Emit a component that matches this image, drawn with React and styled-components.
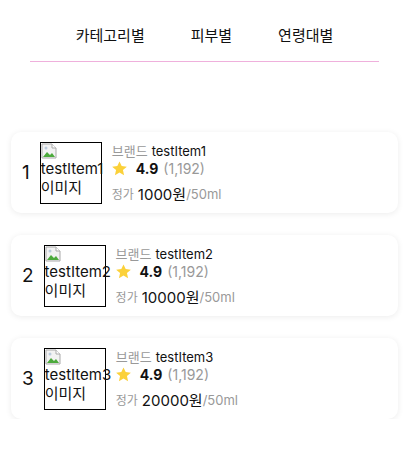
import styled, { createGlobalStyle } from "styled-components";

const GlobalStyle = createGlobalStyle`
  body {
    margin: 0;
    background: #fff;
    font-family: "Inter", "Noto Sans CJK KR", sans-serif;
    color: #111;
  }
`;

const Page = styled.div`
  width: 412px;
  padding: 0 14px 0 11px;
  box-sizing: border-box;
`;

const Nav = styled.nav`
  display: flex;
  justify-content: center;
  gap: 46px;
  margin: 0 19px;
  padding: 25px 0 16px;
  border-bottom: 1px solid #efb0dc;
`;

const Tab = styled.button`
  border: none;
  background: none;
  padding: 0;
  font-family: "Noto Sans CJK KR", sans-serif;
  font-size: 15px;
  line-height: 20px;
  color: #111;
  cursor: pointer;
`;

const List = styled.ul`
  list-style: none;
  margin: 70px 0 0;
  padding: 0;
  display: flex;
  flex-direction: column;
  gap: 22px;
`;

const Card = styled.li`
  display: flex;
  align-items: center;
  height: 81px;
  padding: 0 11px;
  border-radius: 10px;
  background: #fff;
  box-shadow: 0 1px 6px rgba(0, 0, 0, 0.08);
`;

const Rank = styled.span`
  font-size: 19px;
  margin-right: 10px;
  color: #111;
`;

const Thumb = styled.div`
  width: 60px;
  height: 60px;
  border: 1px solid #000;
  flex-shrink: 0;
  font-size: 15px;
  line-height: 19px;
  white-space: nowrap;
  overflow: visible;
  margin-right: 10px;
`;

const BrokenIcon = () => (
  <svg width="16" height="16" viewBox="0 0 16 16" style={{ display: "block" }}>
    <path d="M1 1h10l4 4v10H1z" fill="#f2f2f2" stroke="#aaa" />
    <path d="M11 1v4h4" fill="#fff" stroke="#aaa" />
    <path d="M2 14l4-5 3 3 2-2 3 4z" fill="#4caa3c" />
    <circle cx="5" cy="5" r="1.5" fill="#bcd" />
  </svg>
);

const Info = styled.div`
  display: flex;
  flex-direction: column;
  font-size: 13px;
`;

const Line = styled.div`
  display: flex;
  align-items: center;
  line-height: 17px;
  margin-top: ${(p) => p.$gap || 0}px;
`;

const Muted = styled.span`
  color: #999;
  margin-right: ${(p) => p.$mr || 0}px;
  font-size: ${(p) => p.$size || 13}px;
`;

const Score = styled.strong`
  font-weight: 700;
  font-size: 14px;
  margin: 0 5px 0 9px;
`;

const Price = styled.span`
  font-size: 15px;
  color: #111;
`;

const Star = () => (
  <svg width="15" height="15" viewBox="2 2 20 19" style={{ display: "block" }}>
    <path
      d="M12 2l2.9 6.3 6.9.7-5.2 4.6 1.5 6.8L12 16.9 5.9 20.4l1.5-6.8L2.2 9l6.9-.7z"
      fill="#fbd13a"
    />
  </svg>
);

const items = [
  { rank: 1, name: "testItem1", price: 1000 },
  { rank: 2, name: "testItem2", price: 10000 },
  { rank: 3, name: "testItem3", price: 20000 },
];

export default function App() {
  return (
    <Page>
      <GlobalStyle />
      <Nav>
        <Tab>카테고리별</Tab>
        <Tab>피부별</Tab>
        <Tab>연령대별</Tab>
      </Nav>
      <List>
        {items.map((item) => (
          <Card key={item.rank}>
            <Rank>{item.rank}</Rank>
            <Thumb>
              <BrokenIcon />
              {item.name}
              <br />
              이미지
            </Thumb>
            <Info>
              <Line>
                <Muted $mr={4}>브랜드</Muted>
                {item.name}
              </Line>
              <Line>
                <Star />
                <Score>4.9</Score>
                <Muted $size={14}>(1,192)</Muted>
              </Line>
              <Line $gap={9}>
                <Muted $mr={4} $size={12}>정가</Muted>
                <Price>{item.price}원</Price>
                <Muted>/50ml</Muted>
              </Line>
            </Info>
          </Card>
        ))}
      </List>
    </Page>
  );
}
